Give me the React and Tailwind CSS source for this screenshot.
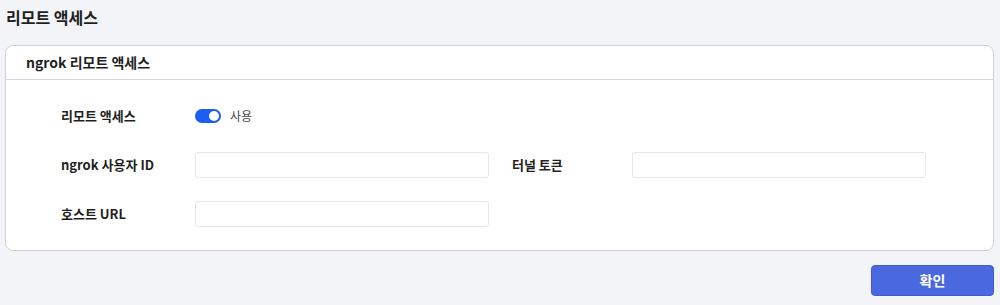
export default function App() {
  const font = { fontFamily: '"Noto Sans CJK KR", "Noto Sans", sans-serif' };
  return (
    <div className="w-[1000px] h-[305px] bg-[#f3f4f8] px-[5px] text-[#1f1f1f]" style={font}>
      <div className="h-[45px] pt-[5px] pl-[1px]">
        <h1 className="text-[16px] leading-[24px] font-bold">리모트 액세스</h1>
      </div>
      <div className="w-[989px] bg-white border border-[#cfd0d4] rounded-[8px]">
        <div className="h-[34px] border-b border-[#d4d5d9] pl-[20px] flex items-center">
          <span className="text-[14px] font-semibold">ngrok 리모트 액세스</span>
        </div>
        <div className="pt-[23px] pb-[23px] pl-[55px] grid grid-cols-[134px_294px_23px_120px_294px] gap-y-[23px] items-center">
          <div className="text-[13px] font-bold h-[26px] flex items-center">리모트 액세스</div>
          <div className="col-span-4 flex items-center gap-[9px] h-[26px]">
            <div className="w-[26px] h-[14px] rounded-full bg-[#1b5ef4] flex items-center justify-end pr-[2px]">
              <div className="w-[10px] h-[10px] rounded-full bg-white" />
            </div>
            <span className="text-[12px] text-[#444]">사용</span>
          </div>

          <div className="text-[13px] font-bold">ngrok 사용자 ID</div>
          <input className="h-[26px] border border-[#e6e6ea] rounded-[3px] bg-white outline-none" />
          <div />
          <div className="text-[13px] font-bold">터널 토큰</div>
          <input className="h-[26px] border border-[#e6e6ea] rounded-[3px] bg-white outline-none" />

          <div className="text-[13px] font-bold">호스트 URL</div>
          <input className="h-[26px] border border-[#e6e6ea] rounded-[3px] bg-white outline-none" />
          <div className="col-span-3" />
        </div>
      </div>
      <div className="flex justify-end pt-[14px] w-[989px]">
        <button className="w-[123px] h-[31px] rounded-[4px] bg-[#4a68e0] border border-[#3f5bd0] text-white text-[14px] font-bold">
          확인
        </button>
      </div>
    </div>
  );
}
